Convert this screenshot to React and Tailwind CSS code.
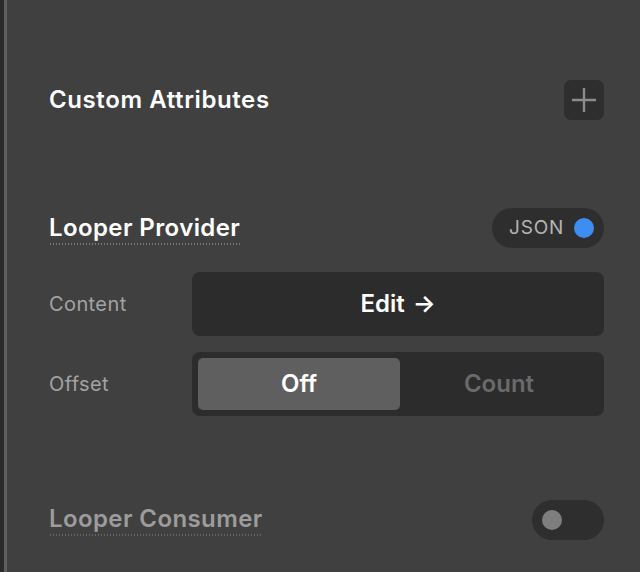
import React from "react";

const font = { fontFamily: "Inter, 'Noto Sans', sans-serif" };

function Dotted({ color }) {
  return (
    <div
      className={
        color === "light"
          ? "h-[2px] w-full bg-[radial-gradient(circle,#7a7a7a_0.7px,transparent_1.1px)] bg-[length:3px_2px]"
          : "h-[2px] w-full bg-[radial-gradient(circle,#666666_0.7px,transparent_1.1px)] bg-[length:3px_2px]"
      }
    />
  );
}

export default function App() {
  return (
    <div
      className="w-[640px] h-[572px] flex bg-[#404040] overflow-hidden"
      style={font}
    >
      <div className="w-[4px] h-full bg-[#2b2b2b]" />
      <div className="w-[3px] h-full bg-[#5e5e5e]" />
      <div className="flex-1 flex flex-col pl-[42px] pr-[36px] pt-[80px]">
        {/* Custom Attributes */}
        <div className="h-[40px] flex items-center justify-between">
          <span className="text-[24px] font-semibold text-white tracking-[0.6px]">
            Custom Attributes
          </span>
          <button className="w-[40px] h-[40px] rounded-[7px] bg-[#2e2e2e] flex items-center justify-center">
            <svg width="26" height="26" viewBox="0 0 26 26">
              <path d="M13 1v24M1 13h24" stroke="#8c8c8c" strokeWidth="2.4" />
            </svg>
          </button>
        </div>

        {/* Looper Provider */}
        <div className="mt-[88px] h-[40px] flex items-center justify-between">
          <div className="flex flex-col pt-[3px]">
            <span className="text-[24px] leading-[28px] font-semibold text-white tracking-[0.4px]">
              Looper Provider
            </span>
            <div className="mt-[1px]">
              <Dotted color="light" />
            </div>
          </div>
          <div className="h-[40px] w-[112px] rounded-full bg-[#2e2e2e] flex items-center justify-between pl-[17px] pr-[10px]">
            <span className="text-[19px] text-[#b4b4b4] tracking-[0.8px]">JSON</span>
            <span className="w-[20px] h-[20px] rounded-full bg-[#3d8ef0]" />
          </div>
        </div>

        {/* Content */}
        <div className="mt-[24px] h-[64px] flex items-center">
          <span className="w-[143px] text-[20px] text-[#a3a3a3] tracking-[0.4px]">Content</span>
          <button className="flex-1 h-[64px] rounded-[8px] bg-[#2c2c2c] flex items-center justify-center text-white text-[24px] font-semibold">
            Edit <span className="ml-[8px]">→</span>
          </button>
        </div>

        {/* Offset */}
        <div className="mt-[16px] h-[64px] flex items-center">
          <span className="w-[143px] text-[20px] text-[#a3a3a3] tracking-[0.4px]">Offset</span>
          <div className="flex-1 h-[64px] rounded-[8px] bg-[#2c2c2c] p-[6px] flex">
            <div className="w-[202px] h-full rounded-[5px] bg-[#5f5f5f] flex items-center justify-center text-white text-[24px] font-semibold">
              Off
            </div>
            <div className="flex-1 flex items-center justify-center text-[#6a6a6a] text-[24px] font-semibold">
              Count
            </div>
          </div>
        </div>

        {/* Looper Consumer */}
        <div className="mt-[84px] h-[40px] flex items-center justify-between">
          <div className="flex flex-col pt-[1px]">
            <span className="text-[24px] leading-[28px] font-semibold text-[#9c9c9c] tracking-[0.4px]">
              Looper Consumer
            </span>
            <div className="mt-[1px]">
              <Dotted color="dark" />
            </div>
          </div>
          <div className="h-[40px] w-[72px] rounded-full bg-[#2e2e2e] flex items-center pl-[10px]">
            <span className="w-[20px] h-[20px] rounded-full bg-[#7e7e7e]" />
          </div>
        </div>
      </div>
    </div>
  );
}
